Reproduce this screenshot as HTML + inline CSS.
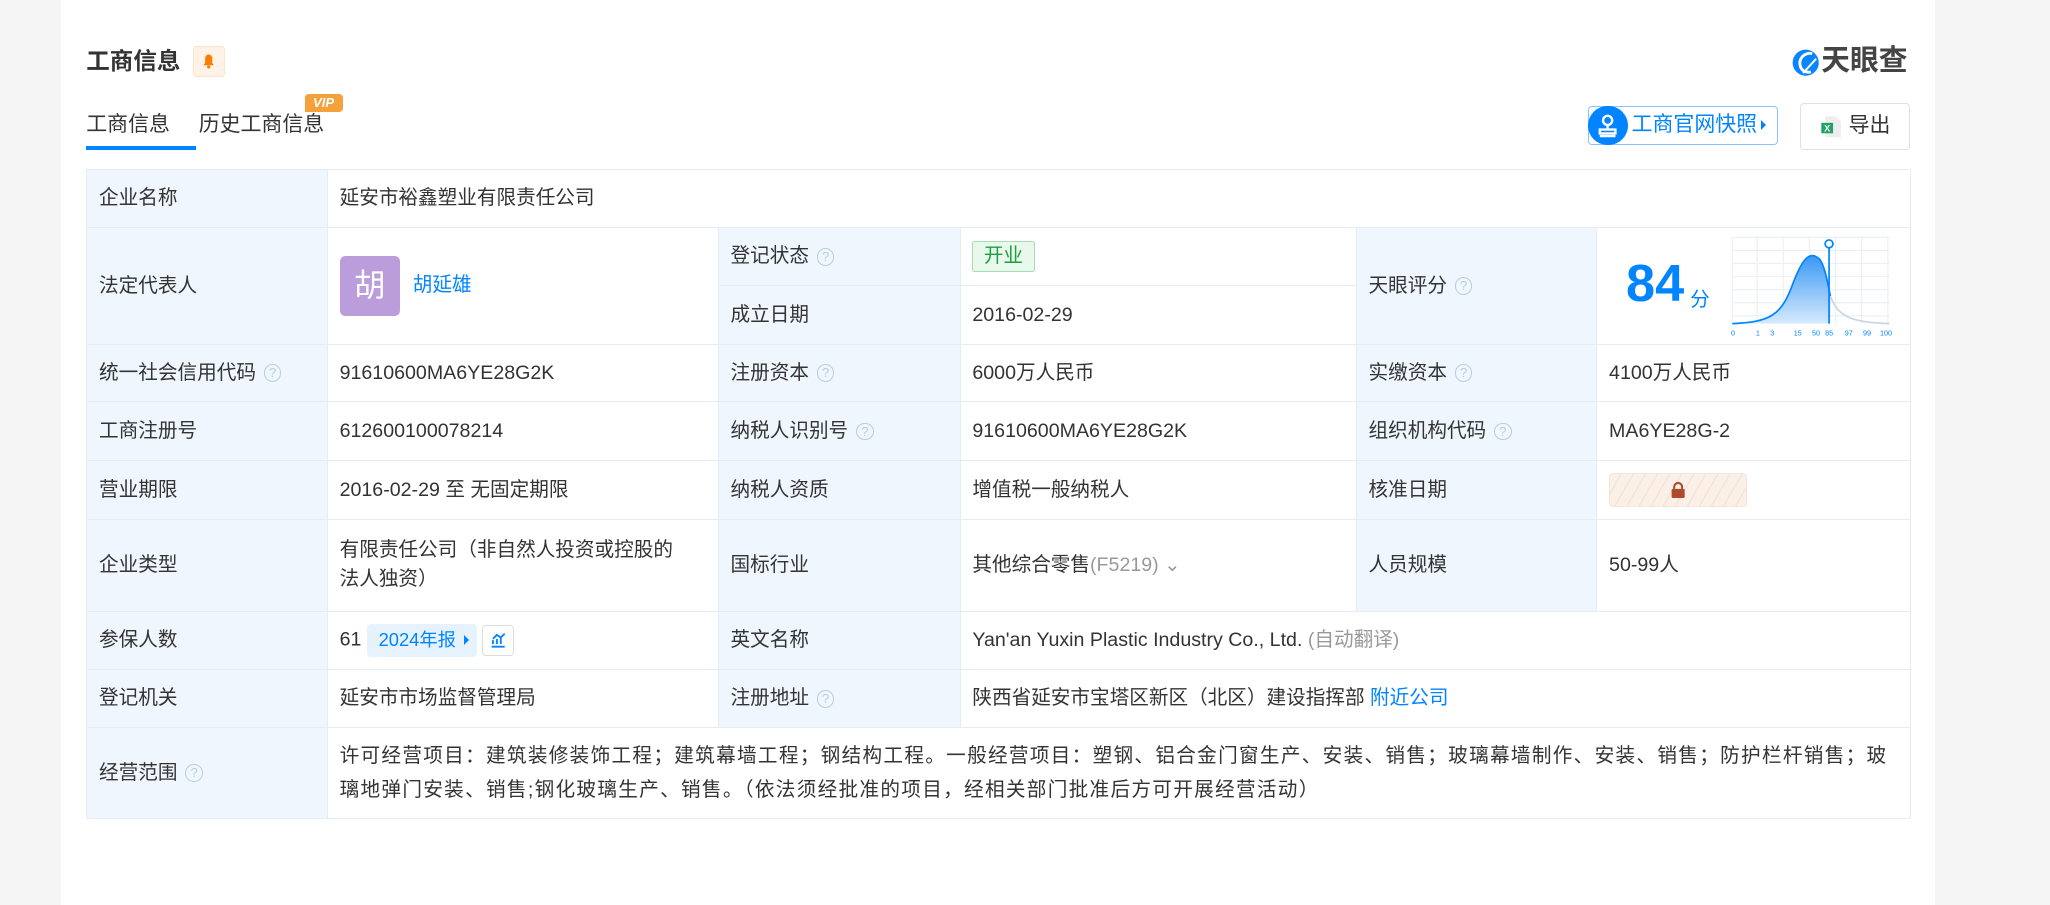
<!DOCTYPE html>
<html><head><meta charset="utf-8"><style>
html,body{margin:0;padding:0;width:2050px;height:905px;overflow:hidden;background:#f5f5f5;}
#w{zoom:1.30740;width:1568px;height:692px;position:relative;font-family:"Liberation Sans","Noto Sans CJK SC",sans-serif;color:#333;}
.panel{position:absolute;left:47px;top:0;width:1433px;height:692px;background:#fff;}
.a{position:absolute;}
table{position:absolute;left:66px;top:129px;border-collapse:collapse;width:1395px;table-layout:fixed;font-size:15px;}
td{border:1px solid #e4ecf5;padding:0 9px;vertical-align:middle;line-height:22px;}
td.l{background:#eff6fd;}
.q{display:inline-block;width:12px;height:12px;border:1px solid #b8cde0;border-radius:50%;font-size:10px;line-height:12px;text-align:center;color:#b8cde0;margin-left:6px;vertical-align:1px;}
.blue{color:#0084ff;}
.gray{color:#999;}
</style></head><body><div id="w">
<div class="panel"></div>
<div class="a" style="left:66px;top:35px;font-size:18px;font-weight:bold;color:#333;line-height:24px;">工商信息</div>
<div class="a" style="left:148px;top:35px;width:24px;height:24px;background:#fff3e8;border:1px solid #ffe2c8;border-radius:3px;box-sizing:border-box;">
<svg width="24" height="24" viewBox="0 0 24 24" style="position:absolute;left:-1px;top:-1px"><path d="M8 15.5h8l-1.3-1.8V10a2.7 2.7 0 0 0-5.4 0v3.7z" fill="#ff7a00"/><circle cx="12" cy="16.8" r="1.2" fill="#ff7a00"/></svg></div>
<svg class="a" style="left:1369px;top:36px" width="24" height="24" viewBox="0 0 24 24"><circle cx="12" cy="12" r="10" fill="#0a84ff"/><path d="M17 5C11 4 6 9 8 15c1 3 4 5 8 4" fill="none" stroke="#fff" stroke-width="2.2"/><path d="M10 20L20 9" stroke="#fff" stroke-width="1.5"/></svg>
<div class="a" style="left:1393px;top:34px;font-size:22px;font-weight:bold;color:#444;line-height:26px;">天眼查</div>
<div class="a" style="left:66px;top:85px;font-size:16px;color:#333;line-height:22px;">工商信息</div>
<div class="a" style="left:66px;top:112px;width:84px;height:3px;background:#0084ff;"></div>
<div class="a" style="left:152px;top:85px;font-size:16px;color:#333;line-height:22px;">历史工商信息</div>
<div class="a" style="left:233px;top:72px;width:29px;height:14px;background:#f5a13b;border-radius:3px 3px 3px 0;color:#fff;font-size:10px;font-weight:bold;font-style:italic;line-height:14px;text-align:center;">VIP</div>
<div class="a" style="left:1215px;top:81px;width:145px;height:30px;border:1px solid #8cc2fb;border-radius:3px;box-sizing:border-box;"></div>
<div class="a" style="left:1215px;top:81px;width:30px;height:30px;background:#0084ff;border-radius:50%;"><svg width="30" height="30" viewBox="0 0 30 30"><circle cx="15" cy="11" r="3.5" fill="none" stroke="#fff" stroke-width="1.8"/><path d="M15 14.5v3M9 18h12v3H9zM9 23h12" stroke="#fff" stroke-width="1.8" fill="none"/></svg></div>
<div class="a" style="left:1248px;top:86px;font-size:16px;color:#0084ff;line-height:20px;">工商官网快照</div>
<div class="a" style="left:1347px;top:92px;width:0;height:0;border-left:4px solid #0084ff;border-top:4px solid transparent;border-bottom:4px solid transparent;"></div>
<div class="a" style="left:1377px;top:79px;width:84px;height:36px;border:1px solid #e0e0e0;border-radius:3px;box-sizing:border-box;"></div>
<svg class="a" style="left:1392px;top:88px" width="18" height="18" viewBox="0 0 18 18"><path d="M4 1h8l4 4v12H4z" fill="#eee"/><rect x="1" y="6" width="9" height="8" fill="#1fa462"/><text x="5.5" y="12.5" font-size="7" fill="#fff" text-anchor="middle" font-family="Liberation Sans" font-weight="bold">X</text></svg>
<div class="a" style="left:1414px;top:86px;font-size:16px;color:#333;line-height:22px;">导出</div>
<table>
<colgroup><col style="width:184px"><col style="width:299px"><col style="width:185px"><col style="width:303px"><col style="width:184px"><col style="width:240px"></colgroup>
<tr style="height:45px"><td class="l">企业名称</td><td colspan="5">延安市裕鑫塑业有限责任公司</td></tr>
<tr style="height:44px"><td class="l" rowspan="2">法定代表人</td><td rowspan="2"><span style="display:inline-block;width:46px;height:46px;background:#bb9ddb;border-radius:4px;color:#fff;font-size:24px;line-height:46px;text-align:center;vertical-align:middle;">胡</span><span class="blue" style="margin-left:10px;">胡延雄</span></td><td class="l">登记状态<span class="q">?</span></td><td><span style="display:inline-block;border:1px solid #a6dcb0;background:#e9f8ec;color:#1c9f3c;padding:0 8px;border-radius:2px;line-height:22px;">开业</span></td><td class="l" rowspan="2">天眼评分<span class="q">?</span></td><td rowspan="2" style="position:relative;"><span style="position:absolute;left:22px;top:18px;font-size:40px;font-weight:bold;color:#0084ff;line-height:50px;">84</span><span style="position:absolute;left:71px;top:44px;font-size:15px;color:#0084ff;">分</span>
<svg style="position:absolute;left:102px;top:6px" width="126" height="78" viewBox="0 0 126 78"><g stroke="#edf1f5" stroke-width="1"><path d="M1 1h120M1 11h120M1 21h120M1 31h120M1 41h120M1 51h120M1 61h120M1 1v66M20 1v66M40 1v66M60 1v66M80 1v66M100 1v66M120 1v66"/></g><defs><linearGradient id="g" x1="0" y1="0" x2="0" y2="1"><stop offset="0" stop-color="#3a98f5"/><stop offset="1" stop-color="#d6eafd"/></linearGradient></defs><path d="M1 67C30 66 38 60 46 40 54 18 60 10 68 18 72 24 74 36 76 46V67z" fill="url(#g)"/><path d="M1 67C30 66 38 60 46 40 54 18 60 10 68 18 72 24 74 36 76 46" fill="none" stroke="#0084ff" stroke-width="1.3"/><path d="M76 46C82 62 92 66 121 67" fill="none" stroke="#c8d4e2" stroke-width="1.3"/><path d="M75 8V67" stroke="#0084ff" stroke-width="1.3"/><circle cx="75" cy="6" r="3" fill="#fff" stroke="#0084ff" stroke-width="1.3"/><g font-size="5.5" fill="#0084ff" font-family="Liberation Sans"><text x="0" y="76">0</text><text x="19" y="76">1</text><text x="30" y="76">3</text><text x="48" y="76">15</text><text x="62" y="76">50</text><text x="72" y="76">85</text><text x="87" y="76">97</text><text x="101" y="76">99</text><text x="114" y="76">100</text></g></svg></td></tr>
<tr style="height:45px"><td class="l">成立日期</td><td>2016-02-29</td></tr>
<tr style="height:44px"><td class="l">统一社会信用代码<span class="q">?</span></td><td>91610600MA6YE28G2K</td><td class="l">注册资本<span class="q">?</span></td><td>6000万人民币</td><td class="l">实缴资本<span class="q">?</span></td><td>4100万人民币</td></tr>
<tr style="height:45px"><td class="l">工商注册号</td><td>612600100078214</td><td class="l">纳税人识别号<span class="q">?</span></td><td>91610600MA6YE28G2K</td><td class="l">组织机构代码<span class="q">?</span></td><td>MA6YE28G-2</td></tr>
<tr style="height:45px"><td class="l">营业期限</td><td>2016-02-29 至 无固定期限</td><td class="l">纳税人资质</td><td>增值税一般纳税人</td><td class="l">核准日期</td><td><span style="display:inline-block;width:104px;height:24px;border:1px solid #f7e4d6;border-radius:3px;background:repeating-linear-gradient(120deg,#faf0e7 0 7px,#f4e3d5 7px 8px);vertical-align:middle;position:relative;"><svg style="position:absolute;left:45px;top:5px" width="14" height="14" viewBox="0 0 14 14"><path d="M4 6V4.5a3 3 0 0 1 6 0V6" fill="none" stroke="#b04a2c" stroke-width="1.6"/><rect x="2" y="6" width="10" height="7" rx="1" fill="#b04a2c"/></svg></span></td></tr>
<tr style="height:70px"><td class="l">企业类型</td><td>有限责任公司（非自然人投资或控股的<br>法人独资）</td><td class="l">国标行业</td><td>其他综合零售<span class="gray">(F5219)</span> <span class="gray">&#8964;</span></td><td class="l">人员规模</td><td>50-99人</td></tr>
<tr style="height:45px"><td class="l">参保人数</td><td>61 <span style="display:inline-block;background:#e6f3ff;color:#0084ff;font-size:14px;padding:0 16px 0 9px;border-radius:3px;line-height:25px;vertical-align:middle;position:relative;">2024年报<span style="position:absolute;right:6px;top:8px;border-left:4px solid #0084ff;border-top:4px solid transparent;border-bottom:4px solid transparent;"></span></span> <span style="display:inline-block;width:24px;height:24px;border:1px solid #ddd;border-radius:3px;vertical-align:middle;box-sizing:border-box;position:relative;"><svg style="position:absolute;left:4px;top:4px" width="14" height="14" viewBox="0 0 14 14"><path d="M2 12h10M3 10V7M6 10V6M9 10V5M3 6l3-3 3 2 3-3" stroke="#0084ff" stroke-width="1.4" fill="none"/></svg></span></td><td class="l">英文名称</td><td colspan="3">Yan'an Yuxin Plastic Industry Co., Ltd. <span class="gray">(自动翻译)</span></td></tr>
<tr style="height:44px"><td class="l">登记机关</td><td>延安市市场监督管理局</td><td class="l">注册地址<span class="q">?</span></td><td colspan="3">陕西省延安市宝塔区新区（北区）建设指挥部 <span class="blue">附近公司</span></td></tr>
<tr style="height:70px"><td class="l">经营范围<span class="q">?</span></td><td colspan="5" style="line-height:26px;letter-spacing:1.0px;white-space:nowrap;">许可经营项目：建筑装修装饰工程；建筑幕墙工程；钢结构工程。一般经营项目：塑钢、铝合金门窗生产、安装、销售；玻璃幕墙制作、安装、销售；防护栏杆销售；玻<br>璃地弹门安装、销售;钢化玻璃生产、销售。（依法须经批准的项目，经相关部门批准后方可开展经营活动）</td></tr>
</table>
</div></body></html>
